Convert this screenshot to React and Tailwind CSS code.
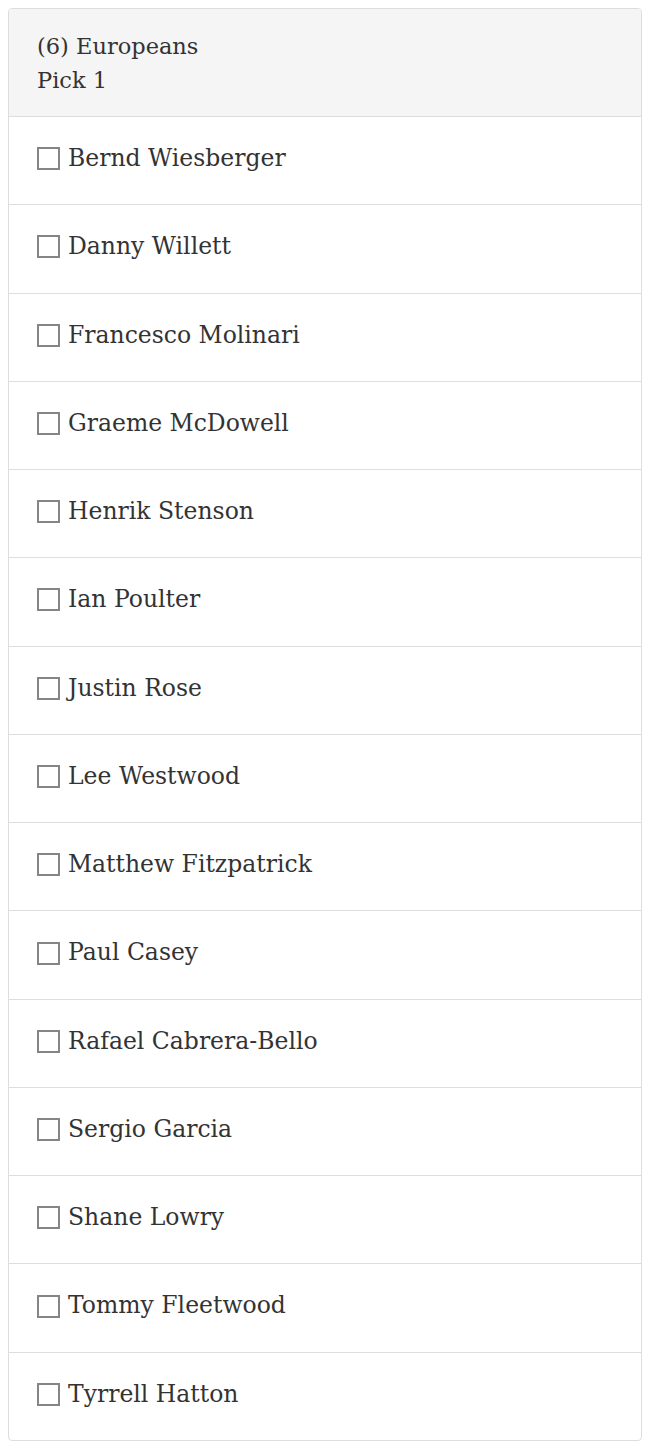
import React from "react";

const players = [
  "Bernd Wiesberger",
  "Danny Willett",
  "Francesco Molinari",
  "Graeme McDowell",
  "Henrik Stenson",
  "Ian Poulter",
  "Justin Rose",
  "Lee Westwood",
  "Matthew Fitzpatrick",
  "Paul Casey",
  "Rafael Cabrera-Bello",
  "Sergio Garcia",
  "Shane Lowry",
  "Tommy Fleetwood",
  "Tyrrell Hatton",
];

export default function App() {
  return (
    <div className="bg-white p-2 text-[#333] [font-family:'DejaVu_Serif',serif]">
      <div className="overflow-hidden rounded-[4px] border border-[#ddd]">
        <div className="h-[107px] bg-[#f5f5f5] px-[28px] pt-[20px] text-[22.5px] leading-[34px]">
          <div>(6) Europeans</div>
          <div>Pick 1</div>
        </div>
        {players.map((name) => (
          <label
            key={name}
            className="flex h-[88.27px] items-center gap-[8px] border-t border-[#ddd] px-[28px] pb-[4px] text-[23.5px]"
          >
            <span className="h-[23px] w-[23px] shrink-0 border-2 border-[#858585] bg-white" />
            <span>{name}</span>
          </label>
        ))}
      </div>
    </div>
  );
}
